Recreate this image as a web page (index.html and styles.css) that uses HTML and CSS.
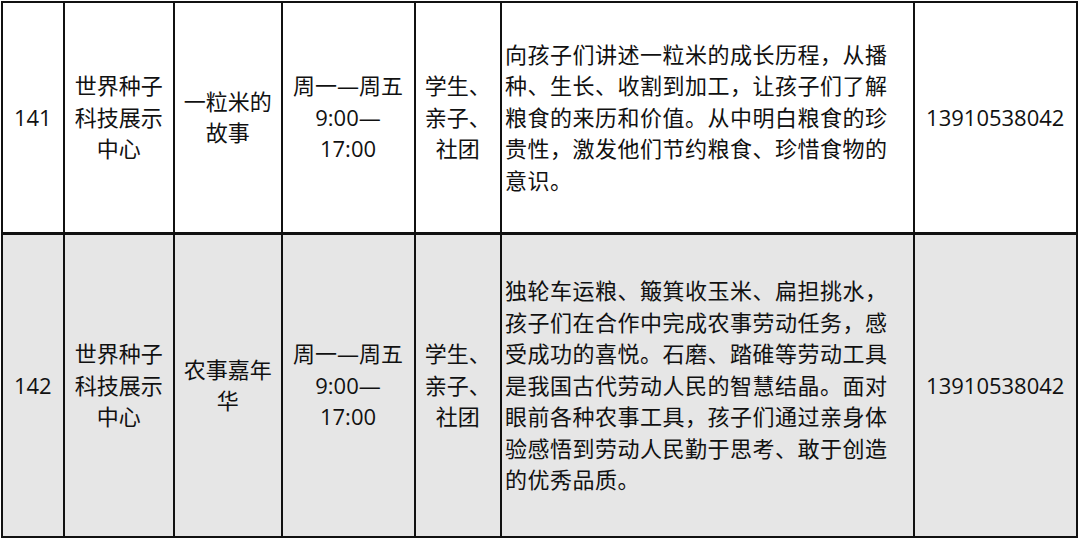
FILE: index.html
```html
<!DOCTYPE html>
<html lang="zh-CN">
<head>
<meta charset="utf-8">
<link rel="stylesheet" href="styles.css">
</head>
<body>
<table class="grid">
  <colgroup>
    <col class="c-no">
    <col class="c-org">
    <col class="c-name">
    <col class="c-time">
    <col class="c-aud">
    <col class="c-desc">
    <col class="c-tel">
  </colgroup>
  <tbody>
    <tr class="row-a">
      <td class="num">141</td>
      <td class="ctr">世界种子<br>科技展示<br>中心</td>
      <td class="ctr">一粒米的<br>故事</td>
      <td class="ctr">周一—周五<br>9:00—<br>17:00</td>
      <td class="ctr">学生、<br>亲子、<br>社团</td>
      <td class="desc">向孩子们讲述一粒米的成长历程，从播<br>种、生长、收割到加工，让孩子们了解<br>粮食的来历和价值。从中明白粮食的珍<br>贵性，激发他们节约粮食、珍惜食物的<br>意识。</td>
      <td class="num">13910538042</td>
    </tr>
    <tr class="row-b">
      <td class="num">142</td>
      <td class="ctr">世界种子<br>科技展示<br>中心</td>
      <td class="ctr">农事嘉年<br>华</td>
      <td class="ctr">周一—周五<br>9:00—<br>17:00</td>
      <td class="ctr">学生、<br>亲子、<br>社团</td>
      <td class="desc">独轮车运粮、簸箕收玉米、扁担挑水，<br>孩子们在合作中完成农事劳动任务，感<br>受成功的喜悦。石磨、踏碓等劳动工具<br>是我国古代劳动人民的智慧结晶。面对<br>眼前各种农事工具，孩子们通过亲身体<br>验感悟到劳动人民勤于思考、敢于创造<br>的优秀品质。</td>
      <td class="num">13910538042</td>
    </tr>
  </tbody>
</table>
</body>
</html>
```

FILE: styles.css
```css
html, body {
  margin: 0;
  padding: 0;
  background: #ffffff;
}

body {
  width: 1080px;
  height: 540px;
  overflow: hidden;
  font-family: "Open Sans", "Noto Sans CJK SC", sans-serif;
  font-size: 22px;
  line-height: 31.5px;
  color: #111111;
}

.grid {
  margin: 1px 0 0 1px;
  width: 1077px;
  border-collapse: collapse;
  table-layout: fixed;
}

.c-no   { width: 61.5px; }
.c-org  { width: 110.5px; }
.c-name { width: 107.5px; }
.c-time { width: 133px; }
.c-aud  { width: 86.5px; }
.c-desc { width: 412.5px; }
.c-tel  { width: 163.5px; }

.grid td {
  border: 2px solid #111111;
  padding: 0;
  vertical-align: middle;
  overflow: hidden;
}

.row-a { height: 231px; }
.row-b { height: 304px; }

.row-a td { background: #ffffff; }
.row-b td { background: #e6e6e6; }

.row-a td { border-bottom-width: 3px; }

.num {
  text-align: center;
  white-space: nowrap;
}

.ctr {
  text-align: center;
  white-space: nowrap;
}

.desc {
  text-align: left;
  white-space: nowrap;
  letter-spacing: 0.5px;
}

.grid td.desc {
  padding-left: 3px;
}
```
